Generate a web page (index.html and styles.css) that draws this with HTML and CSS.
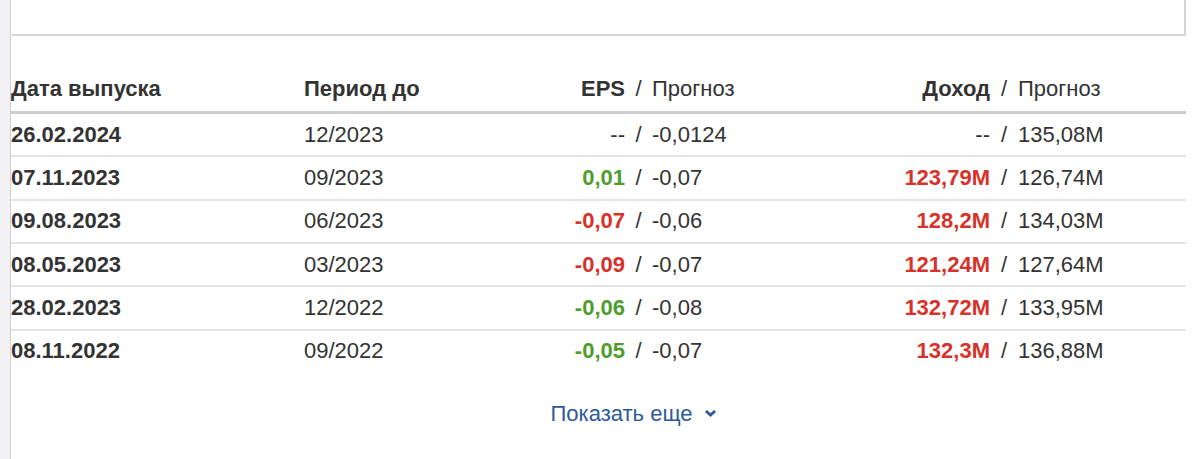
FILE: index.html
```html
<!DOCTYPE html>
<html lang="ru">
<head>
<meta charset="utf-8">
<title>Отчеты о прибыли</title>
<link rel="stylesheet" href="styles.css">
</head>
<body>
<div class="page">
  <aside class="rail"></aside>
  <main class="main">
    <div class="topbox"></div>
    <div class="table">
      <div class="row head">
        <div class="c-date"><b>Дата выпуска</b></div>
        <div class="c-period"><b>Период до</b></div>
        <div class="c-act"><b>EPS</b></div>
        <div class="c-sl">/</div>
        <div class="c-fc">Прогноз</div>
        <div class="c-act"><b>Доход</b></div>
        <div class="c-sl">/</div>
        <div class="c-fc">Прогноз</div>
      </div>
      <div class="row">
        <div class="c-date"><b>26.02.2024</b></div>
        <div class="c-period">12/2023</div>
        <div class="c-act">--</div>
        <div class="c-sl">/</div>
        <div class="c-fc">-0,0124</div>
        <div class="c-act">--</div>
        <div class="c-sl">/</div>
        <div class="c-fc">135,08M</div>
      </div>
      <div class="row">
        <div class="c-date"><b>07.11.2023</b></div>
        <div class="c-period">09/2023</div>
        <div class="c-act up"><b>0,01</b></div>
        <div class="c-sl">/</div>
        <div class="c-fc">-0,07</div>
        <div class="c-act down"><b>123,79M</b></div>
        <div class="c-sl">/</div>
        <div class="c-fc">126,74M</div>
      </div>
      <div class="row">
        <div class="c-date"><b>09.08.2023</b></div>
        <div class="c-period">06/2023</div>
        <div class="c-act down"><b>-0,07</b></div>
        <div class="c-sl">/</div>
        <div class="c-fc">-0,06</div>
        <div class="c-act down"><b>128,2M</b></div>
        <div class="c-sl">/</div>
        <div class="c-fc">134,03M</div>
      </div>
      <div class="row">
        <div class="c-date"><b>08.05.2023</b></div>
        <div class="c-period">03/2023</div>
        <div class="c-act down"><b>-0,09</b></div>
        <div class="c-sl">/</div>
        <div class="c-fc">-0,07</div>
        <div class="c-act down"><b>121,24M</b></div>
        <div class="c-sl">/</div>
        <div class="c-fc">127,64M</div>
      </div>
      <div class="row">
        <div class="c-date"><b>28.02.2023</b></div>
        <div class="c-period">12/2022</div>
        <div class="c-act up"><b>-0,06</b></div>
        <div class="c-sl">/</div>
        <div class="c-fc">-0,08</div>
        <div class="c-act down"><b>132,72M</b></div>
        <div class="c-sl">/</div>
        <div class="c-fc">133,95M</div>
      </div>
      <div class="row last">
        <div class="c-date"><b>08.11.2022</b></div>
        <div class="c-period">09/2022</div>
        <div class="c-act up"><b>-0,05</b></div>
        <div class="c-sl">/</div>
        <div class="c-fc">-0,07</div>
        <div class="c-act down"><b>132,3M</b></div>
        <div class="c-sl">/</div>
        <div class="c-fc">136,88M</div>
      </div>
    </div>
    <div class="more">
      <a class="more-link" href="#">Показать еще
        <svg class="chev" width="11" height="7" viewBox="0 0 11 7"><polygon points="0,1.9 1.9,0 5.5,3.2 9.1,0 11,1.9 5.5,7" fill="#2d5a99"/></svg>
      </a>
    </div>
  </main>
</div>
</body>
</html>
```

FILE: styles.css
```css
html, body {
  margin: 0;
  padding: 0;
  background: #fff;
}
body {
  font-family: "Liberation Sans", Arial, sans-serif;
  font-size: 22px;
  color: #333;
}
.page {
  display: flex;
  min-height: 459px;
}
.rail {
  width: 10px;
  flex: none;
  background: #f2f2f5;
  border-right: 1px solid #cfcfd2;
}
.main {
  width: 1175px;
  flex: none;
}
.topbox {
  height: 34px;
  margin-left: 1px;
  border-bottom: 2px solid #d6d6d6;
  border-right: 2px solid #d6d6d6;
}
.table {
  display: flex;
  flex-direction: column;
}
.row {
  display: grid;
  grid-template-columns: 293px 200px 121px 27px 208px 130px 28px 1fr;
  align-items: center;
  height: 41.33px;
  line-height: 24px;
  border-bottom: 2px solid #e4e4e4;
  white-space: nowrap;
}
.row.head {
  height: 78px;
  align-items: end;
  box-sizing: border-box;
  padding-bottom: 10px;
  border-bottom: 3px solid #cdcdcd;
}
.row.last {
  border-bottom: none;
}
b {
  font-weight: bold;
}
.c-act {
  text-align: right;
}
.c-sl {
  text-align: center;
}
.c-fc {
  text-align: left;
}
.up {
  color: #4f9d2d;
}
.down {
  color: #d7322a;
}
.more {
  display: flex;
  justify-content: center;
  padding-top: 30px;
  padding-left: 70px;
}
.more-link {
  color: #2d5a99;
  text-decoration: none;
  line-height: 24px;
  display: flex;
  align-items: center;
  gap: 13px;
}
.chev {
  display: block;
  margin-top: -1px;
}
```
